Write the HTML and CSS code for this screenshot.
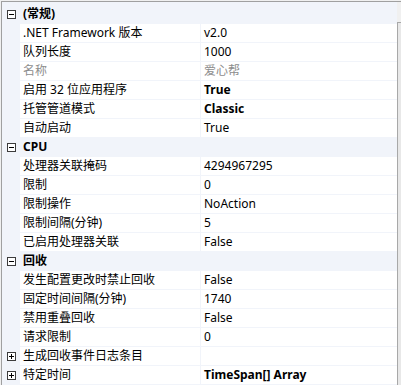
FILE: index.html
```html
<!DOCTYPE html>
<html lang="zh-CN">
<head>
  <meta charset="UTF-8">
  <title>高级设置</title>
  <link rel="stylesheet" href="styles.css">
</head>
<body>
  <div class="frame">
    <div class="grid">
      <div class="row cat">
        <div class="gutter"><svg class="box" width="9" height="9"><rect x="0.5" y="0.5" width="8" height="8"/><line x1="2" y1="4.5" x2="7" y2="4.5"/></svg></div>
        <div class="label">(常规)</div>
      </div>
      <div class="row"><div class="gutter"></div><div class="name">.NET Framework 版本</div><div class="value">v2.0</div></div>
      <div class="row"><div class="gutter"></div><div class="name">队列长度</div><div class="value">1000</div></div>
      <div class="row off"><div class="gutter"></div><div class="name">名称</div><div class="value">爱心帮</div></div>
      <div class="row"><div class="gutter"></div><div class="name">启用 32 位应用程序</div><div class="value strong">True</div></div>
      <div class="row"><div class="gutter"></div><div class="name">托管管道模式</div><div class="value strong">Classic</div></div>
      <div class="row"><div class="gutter"></div><div class="name">自动启动</div><div class="value">True</div></div>

      <div class="row cat">
        <div class="gutter"><svg class="box" width="9" height="9"><rect x="0.5" y="0.5" width="8" height="8"/><line x1="2" y1="4.5" x2="7" y2="4.5"/></svg></div>
        <div class="label">CPU</div>
      </div>
      <div class="row"><div class="gutter"></div><div class="name">处理器关联掩码</div><div class="value">4294967295</div></div>
      <div class="row"><div class="gutter"></div><div class="name">限制</div><div class="value">0</div></div>
      <div class="row"><div class="gutter"></div><div class="name">限制操作</div><div class="value">NoAction</div></div>
      <div class="row"><div class="gutter"></div><div class="name">限制间隔(分钟)</div><div class="value">5</div></div>
      <div class="row"><div class="gutter"></div><div class="name">已启用处理器关联</div><div class="value">False</div></div>

      <div class="row cat">
        <div class="gutter"><svg class="box" width="9" height="9"><rect x="0.5" y="0.5" width="8" height="8"/><line x1="2" y1="4.5" x2="7" y2="4.5"/></svg></div>
        <div class="label">回收</div>
      </div>
      <div class="row"><div class="gutter"></div><div class="name">发生配置更改时禁止回收</div><div class="value">False</div></div>
      <div class="row"><div class="gutter"></div><div class="name">固定时间间隔(分钟)</div><div class="value">1740</div></div>
      <div class="row"><div class="gutter"></div><div class="name">禁用重叠回收</div><div class="value">False</div></div>
      <div class="row"><div class="gutter"></div><div class="name">请求限制</div><div class="value">0</div></div>
      <div class="row">
        <div class="gutter"><svg class="box" width="9" height="9"><rect x="0.5" y="0.5" width="8" height="8"/><line x1="2" y1="4.5" x2="7" y2="4.5"/><line x1="4.5" y1="2" x2="4.5" y2="7"/></svg></div>
        <div class="name">生成回收事件日志条目</div><div class="value"></div>
      </div>
      <div class="row">
        <div class="gutter"><svg class="box" width="9" height="9"><rect x="0.5" y="0.5" width="8" height="8"/><line x1="2" y1="4.5" x2="7" y2="4.5"/><line x1="4.5" y1="2" x2="4.5" y2="7"/></svg></div>
        <div class="name">特定时间</div><div class="value strong">TimeSpan[] Array</div>
      </div>
    </div>
    <div class="scroll"><div class="bar"></div></div>
  </div>
</body>
</html>
```

FILE: styles.css
```css
/* Property grid */
body {
  margin: 0;
  background: #f0f0f0;
  font-family: "Noto Sans", "Noto Sans CJK SC", sans-serif;
  font-size: 12px;
  color: #000;
  overflow: hidden;
}

.frame {
  display: flex;
  height: 384px;
  margin: 1px 0 0 1px;
  border-top: 1px solid #a0a0a0;
  border-left: 1px solid #a0a0a0;
}

.grid {
  width: 395px;
  flex: none;
  padding-top: 3px;
  background: #f1f4fa;
}

.row {
  display: flex;
  height: 18px;
  margin-bottom: 1px;
  line-height: 18px;
  white-space: nowrap;
}

.gutter {
  width: 18px;
  flex: none;
  display: flex;
  align-items: center;
  padding-left: 5px;
  box-sizing: border-box;
}

.box {
  display: block;
}

.box rect {
  fill: #fff;
  stroke: #3c3c3c;
  stroke-width: 1;
}

.box line {
  stroke: #000;
  stroke-width: 1;
}

.cat .label {
  padding-left: 3px;
  font-weight: bold;
}

.name {
  width: 180px;
  flex: none;
  padding-left: 3px;
  box-sizing: border-box;
  background: #fff;
  overflow: hidden;
}

.value {
  flex: 1;
  margin-left: 1px;
  padding-left: 3px;
  background: #fff;
  overflow: hidden;
}

.strong {
  font-weight: bold;
}

.off .name,
.off .value {
  color: #8d8d8d;
}

/* Scrollbar edge */
.scroll {
  flex: 1;
  padding-top: 20px;
  background: #f0f0f0;
}

.bar {
  height: 100%;
  border-top: 1px solid #a8a8a8;
  border-left: 1px solid #a8a8a8;
  background: #e8e8e8;
}
```
